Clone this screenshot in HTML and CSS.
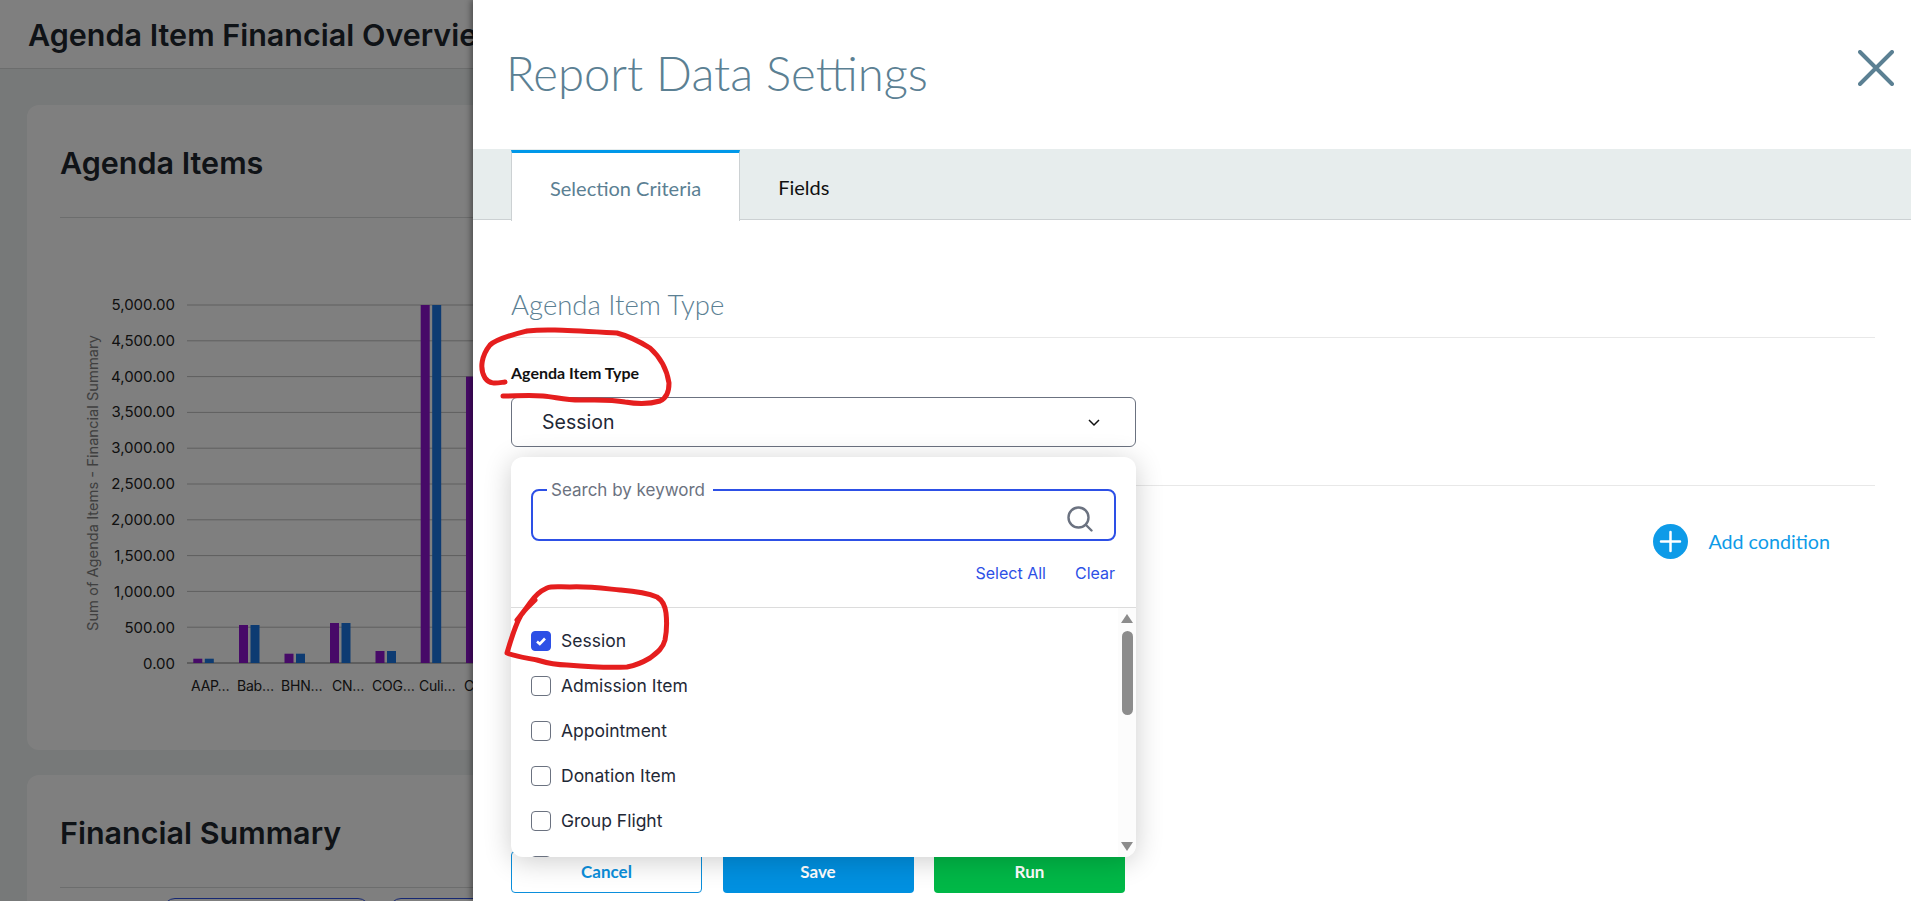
FILE: index.html
```html
<!DOCTYPE html>
<html lang="en">
<head>
    <meta charset="UTF-8">
    <meta name="viewport" content="width=device-width, initial-scale=1.0">
    <title>Agenda Item Financial Overview</title>
    <link rel="stylesheet" href="styles.css">
</head>
<body>

    <header class="page-header">
        <h1>Agenda Item Financial Overview</h1>
    </header>

    <main class="page-main">
        <section class="card chart-card">
            <h2 class="card-title">Agenda Items</h2>
            <svg class="chart" width="1000" height="500" viewBox="0 0 1000 500">
                <g class="grid">
                    <line x1="127" x2="1000" y1="87" y2="87"></line>
                    <line x1="127" x2="1000" y1="122.8" y2="122.8"></line>
                    <line x1="127" x2="1000" y1="158.6" y2="158.6"></line>
                    <line x1="127" x2="1000" y1="194.4" y2="194.4"></line>
                    <line x1="127" x2="1000" y1="230.2" y2="230.2"></line>
                    <line x1="127" x2="1000" y1="266" y2="266"></line>
                    <line x1="127" x2="1000" y1="301.8" y2="301.8"></line>
                    <line x1="127" x2="1000" y1="337.6" y2="337.6"></line>
                    <line x1="127" x2="1000" y1="373.4" y2="373.4"></line>
                    <line x1="127" x2="1000" y1="409.2" y2="409.2"></line>
                    <line class="base" x1="127" x2="1000" y1="445" y2="445"></line>
                </g>
                <g class="y-labels">
                    <text x="115" y="92">5,000.00</text>
                    <text x="115" y="128">4,500.00</text>
                    <text x="115" y="164">4,000.00</text>
                    <text x="115" y="199">3,500.00</text>
                    <text x="115" y="235">3,000.00</text>
                    <text x="115" y="271">2,500.00</text>
                    <text x="115" y="307">2,000.00</text>
                    <text x="115" y="343">1,500.00</text>
                    <text x="115" y="379">1,000.00</text>
                    <text x="115" y="415">500.00</text>
                    <text x="115" y="451">0.00</text>
                </g>
                <text class="y-title" transform="translate(38 265) rotate(-90)">Sum of Agenda Items - Financial Summary</text>
                <g class="bars-a">
                    <rect x="133.3" y="440.7" width="9" height="4.3"></rect>
                    <rect x="179" y="407" width="9" height="38"></rect>
                    <rect x="224.5" y="435.7" width="9" height="9.3"></rect>
                    <rect x="270" y="405" width="9" height="40"></rect>
                    <rect x="315.5" y="433" width="9" height="12"></rect>
                    <rect x="360.7" y="87" width="9" height="358"></rect>
                    <rect x="406" y="158.6" width="9" height="286.4"></rect>
                </g>
                <g class="bars-b">
                    <rect x="144.8" y="440.7" width="9" height="4.3"></rect>
                    <rect x="190.5" y="407" width="9" height="38"></rect>
                    <rect x="236" y="435.7" width="9" height="9.3"></rect>
                    <rect x="281.5" y="405" width="9" height="40"></rect>
                    <rect x="327" y="433" width="9" height="12"></rect>
                    <rect x="372.2" y="87" width="9" height="358"></rect>
                    <rect x="417.5" y="158.6" width="9" height="286.4"></rect>
                </g>
                <g class="x-labels">
                    <text x="131" y="473">AAP…</text>
                    <text x="177" y="473">Bab…</text>
                    <text x="221" y="473">BHN…</text>
                    <text x="272" y="473">CN…</text>
                    <text x="312" y="473">COG…</text>
                    <text x="359" y="473">Culi…</text>
                    <text x="404" y="473">C…</text>
                </g>
            </svg>
        </section>

        <section class="card">
            <h2 class="card-title">Financial Summary</h2>
            <div class="pill-row">
                <span class="pill"></span>
                <span class="pill"></span>
            </div>
        </section>
    </main>

    <div class="overlay"></div>

    <aside class="panel">
        <div class="panel-head">
            <div class="panel-title">Report Data Settings</div>
            <svg class="close-icon" width="36" height="36" viewBox="0 0 36 36">
                <path d="M2 2 L34 34 M34 2 L2 34"></path>
            </svg>
        </div>

        <div class="tabs">
            <div class="tab active">Selection Criteria</div>
            <div class="tab">Fields</div>
        </div>

        <div class="panel-body">
            <div class="section-title">Agenda Item Type</div>

            <div class="field">
                <label class="field-label">Agenda Item Type</label>
                <div class="select-box">
                    <span>Session</span>
                    <svg width="14" height="9" viewBox="0 0 14 9">
                        <path d="M2 2 L7 7 L12 2"></path>
                    </svg>
                </div>

                <div class="menu">
                    <div class="menu-head">
                        <fieldset class="search">
                            <legend>Search by keyword</legend>
                            <input type="text">
                            <svg width="26" height="26" viewBox="0 0 26 26">
                                <circle cx="11.5" cy="11.5" r="10"></circle>
                                <path d="M19 19 L24.5 24.5"></path>
                            </svg>
                        </fieldset>
                        <div class="menu-actions">
                            <a>Select All</a>
                            <a>Clear</a>
                        </div>
                    </div>
                    <div class="menu-list">
                        <div class="option">
                            <span class="check checked">
                                <svg width="14" height="14" viewBox="0 0 14 14">
                                    <path d="M3 7.5 L5.8 10 L11 4.5"></path>
                                </svg>
                            </span>
                            Session
                        </div>
                        <div class="option"><span class="check"></span>Admission Item</div>
                        <div class="option"><span class="check"></span>Appointment</div>
                        <div class="option"><span class="check"></span>Donation Item</div>
                        <div class="option"><span class="check"></span>Group Flight</div>
                        <div class="option"><span class="check"></span></div>
                        <div class="scrollbar">
                            <span class="arrow-up"></span>
                            <span class="thumb"></span>
                            <span class="arrow-down"></span>
                        </div>
                    </div>
                </div>
            </div>

            <div class="add-row">
                <svg width="35" height="35" viewBox="0 0 35 35">
                    <circle cx="17.5" cy="17.5" r="17.5"></circle>
                    <path d="M17.5 8 V27 M8 17.5 H27"></path>
                </svg>
                <span>Add condition</span>
            </div>
        </div>

        <div class="panel-foot">
            <button class="btn btn-cancel">Cancel</button>
            <button class="btn btn-save">Save</button>
            <button class="btn btn-run">Run</button>
        </div>
    </aside>

    <!-- red pen marks somebody drew on the screenshot -->
    <svg class="scribble" width="1911" height="901" viewBox="0 0 1911 901">
        <path d="M505 382 C497 383 490 385 485 378 C479 368 482 355 490 345 C498 338 515 334 527 331 C545 329 560 330 617 333 C632 337 642 343 650 348 C660 357 667 370 669 383 C669 392 667 398 660 401 C650 404 637 404 625 402 C610 399 595 400 580 400 C565 400 555 397 543 396 C530 395 515 396 503 396"></path>
        <path d="M535 600 C527 608 522 612 520 617 C515 626 512 636 507 653 C517 657 527 658 537 660 C547 663 557 665 567 665 C590 667 610 668 627 667 C638 665 645 661 650 658 C658 652 663 648 665 640 C667 630 667 622 666 613 C665 605 662 600 657 597 C645 592 632 591 620 590 C600 588 585 586 570 587 C558 587 552 586 547 588 C538 592 534 597 530 603 C526 609 521 615 517 620"></path>
    </svg>

</body>
</html>
```

FILE: styles.css
```css
html, body {
    margin: 0;
    height: 100%;
}
body {
    position: relative;
    height: 100vh;
    overflow: hidden;
    background: #eef2f2;
    font-family: Inter, Roboto, sans-serif;
    color: #1f272e;
}

/* page behind the drawer */
.page-header {
    height: 68px;
    background: #fff;
    border-bottom: 1px solid #d8dbdb;
    padding-left: 28px;
    display: flex;
    align-items: center;
}
.page-header h1 {
    margin: 0;
    font-size: 30.5px;
    font-weight: 600;
    white-space: nowrap;
}
.page-main {
    padding: 36px 27px 0;
    display: flex;
    flex-direction: column;
    gap: 25px;
}
.card {
    background: #fff;
    border-radius: 12px;
    padding: 36px 33px 0;
}
.chart-card { height: 609px; }
.card-title {
    margin: 0;
    font-size: 30.5px;
    font-weight: 600;
    line-height: 44px;
    padding-bottom: 32px;
    border-bottom: 1px solid #d8dbdb;
}
.chart { display: block; }
.grid line { stroke: #bdbdbd; stroke-width: 1; }
.grid .base { stroke-width: 2; }
.y-labels text {
    font-size: 15px;
    fill: #222;
    text-anchor: end;
}
.x-labels text {
    font-size: 14px;
    letter-spacing: -0.2px;
    fill: #222;
}
.y-title {
    font-size: 14.7px;
    fill: #808080;
    text-anchor: middle;
}
.bars-a rect { fill: #8e14d0; }
.bars-b rect { fill: #1a76e4; }
.pill-row {
    display: flex;
    gap: 19px;
    padding: 10px 0 0 103px;
}
.pill {
    width: 205px;
    height: 40px;
    border: 1px solid #2d50e6;
    border-radius: 12px;
}

.overlay {
    position: absolute;
    inset: 0;
    background: rgba(0, 0, 0, 0.5);
}

/* drawer */
.panel {
    position: absolute;
    top: 0;
    right: 0;
    bottom: 0;
    width: 1438px;
    background: #fff;
    box-shadow: -2px 0 6px rgba(0, 0, 0, 0.4);
    display: flex;
    flex-direction: column;
    font-family: Lato, sans-serif;
}
.panel-head {
    height: 149px;
    box-sizing: border-box;
    padding: 0 17px 5px 33px;
    display: flex;
    align-items: center;
    justify-content: space-between;
    flex-shrink: 0;
}
.panel-title {
    font-size: 47.3px;
    font-weight: 300;
    color: #5b8093;
}
.close-icon { margin-bottom: 8px; }
.close-icon path {
    fill: none;
    stroke: #5b8093;
    stroke-width: 4;
    stroke-linecap: round;
}
.tabs {
    height: 71px;
    padding-left: 38px;
    background: #e7eded;
    border-bottom: 1px solid #ccd1d3;
    box-sizing: border-box;
    display: flex;
    flex-shrink: 0;
}
.tab {
    padding: 6px 38px 0;
    display: flex;
    align-items: center;
    font-size: 20px;
    color: #111;
}
.tab.active {
    height: 71px;
    box-sizing: border-box;
    padding-top: 1px;
    background: #fff;
    color: #5b8093;
    border-top: 3px solid #0098e9;
    border-left: 1px solid #ccd1d3;
    border-right: 1px solid #ccd1d3;
    margin-top: 1px;
}
.panel-body {
    flex: 1;
    padding: 65px 36px 0 38px;
}
.section-title {
    font-size: 27.5px;
    font-weight: 300;
    color: #5b8093;
    line-height: 40px;
    padding-bottom: 12px;
    border-bottom: 1px solid #e8e8e8;
}
.field {
    position: relative;
    padding: 26px 0 38px;
    border-bottom: 1px solid #e8e8e8;
}
.field-label {
    display: block;
    font-size: 16px;
    font-weight: 700;
    color: #111;
    line-height: 18px;
    margin-bottom: 15px;
}
.select-box {
    width: 625px;
    height: 50px;
    box-sizing: border-box;
    border: 1px solid #6b7280;
    border-radius: 6px;
    padding: 0 34px 0 30px;
    display: flex;
    align-items: center;
    justify-content: space-between;
    font-family: Inter, Roboto, sans-serif;
    font-size: 19.5px;
    color: #1f2937;
}
.select-box path {
    fill: none;
    stroke: #111;
    stroke-width: 1.5;
}
.menu {
    position: absolute;
    top: 119px;
    left: 0;
    width: 625px;
    height: 400px;
    background: #fff;
    border-radius: 12px;
    box-shadow: 0 4px 28px rgba(0, 0, 0, 0.2);
    font-family: Inter, Roboto, sans-serif;
    overflow: hidden;
    z-index: 2;
}
.menu-head {
    box-sizing: border-box;
    padding: 24px 20px 0;
    border-bottom: 1px solid #dcdcdc;
    height: 151px;
}
.search {
    margin: 0;
    height: 60px;
    box-sizing: border-box;
    border: 2px solid #2d50e6;
    border-radius: 8px;
    padding: 0 21px 0 16px;
    display: flex;
    align-items: center;
}
.search legend {
    margin-left: -2px;
    padding: 0 8px 0 4px;
    font-size: 17px;
    line-height: 18px;
    color: #6b7280;
}
.search input {
    flex: 1;
    border: none;
    outline: none;
    background: none;
}
.search svg { fill: none; stroke: #6b7280; stroke-width: 2.4; }
.search path { stroke-linecap: round; }
.menu-actions {
    margin-top: 20px;
    padding-right: 1px;
    display: flex;
    justify-content: flex-end;
    gap: 29px;
    font-size: 16px;
    line-height: 24px;
    color: #2d50e6;
}
.menu-list {
    position: relative;
    padding-top: 10px;
}
.option {
    height: 45px;
    padding-left: 20px;
    display: flex;
    align-items: center;
    gap: 10px;
    font-size: 17.5px;
    color: #1f2937;
}
.check {
    width: 20px;
    height: 20px;
    box-sizing: border-box;
    border: 1px solid #6b7280;
    border-radius: 4px;
    display: flex;
    align-items: center;
    justify-content: center;
}
.check.checked {
    background: #2d50e6;
    border-color: #2d50e6;
}
.check path {
    fill: none;
    stroke: #fff;
    stroke-width: 2.6;
}
.scrollbar {
    position: absolute;
    top: 0;
    right: 0;
    width: 18px;
    height: 249px;
    background: #fcfcfc;
    display: flex;
    flex-direction: column;
    align-items: center;
}
.arrow-up, .arrow-down {
    width: 0;
    height: 0;
    border-left: 6.5px solid transparent;
    border-right: 6.5px solid transparent;
}
.arrow-up {
    margin-top: 6px;
    border-bottom: 9px solid #8c8c8c;
}
.arrow-down {
    margin-top: 127px;
    border-top: 9px solid #8c8c8c;
}
.thumb {
    width: 11px;
    height: 84px;
    margin-top: 8px;
    background: #8c8c8c;
    border-radius: 6px;
}
.add-row {
    display: flex;
    justify-content: flex-end;
    align-items: center;
    gap: 20px;
    padding: 38px 45px 0 0;
    font-size: 19.7px;
    color: #0e9be8;
}
.add-row circle { fill: #0e9be8; }
.add-row path { stroke: #fff; stroke-width: 2.5; stroke-linecap: round; }
.panel-foot {
    padding: 0 0 8px 38px;
    display: flex;
    gap: 20.5px;
}
.btn {
    width: 191px;
    height: 42px;
    padding: 0 0 2px;
    border-radius: 4px;
    border: 1px solid transparent;
    font-family: Lato, sans-serif;
    font-size: 17px;
    font-weight: 700;
    color: #fff;
}
.btn-cancel {
    background: #fff;
    border-color: #0b8fdc;
    color: #0b8fdc;
}
.btn-save { background: #0090e0; }
.btn-run { background: #00b847; }

.scribble {
    position: absolute;
    top: 0;
    left: 0;
    z-index: 3;
    pointer-events: none;
}
.scribble path {
    fill: none;
    stroke: #e51e1e;
    stroke-width: 5;
    stroke-linecap: round;
    stroke-linejoin: round;
}
```
